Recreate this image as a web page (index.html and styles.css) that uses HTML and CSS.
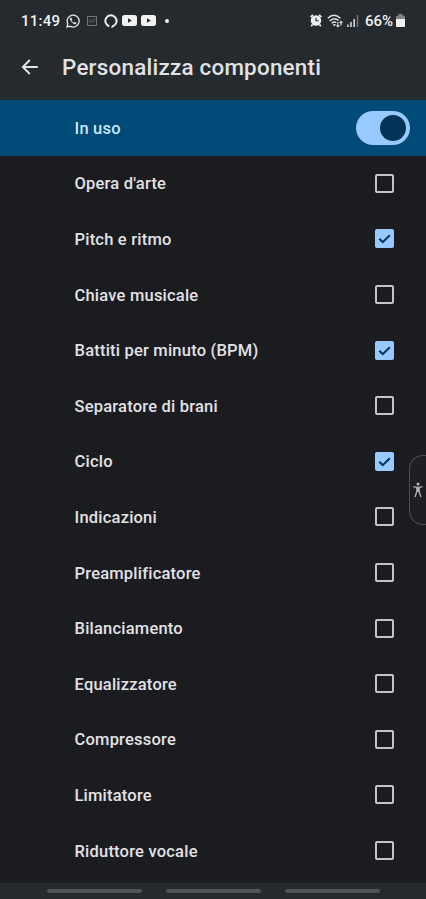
FILE: index.html
```html
<!DOCTYPE html>
<html lang="it">
<head>
<meta charset="utf-8">
<title>Personalizza componenti</title>
<link rel="stylesheet" href="styles.css">
</head>
<body>
<div class="screen">
  <div class="status">
    <span class="clock">11:49</span>
    <svg class="ic-chat" width="14" height="14" viewBox="0 0 14 14" fill="none"><path d="M1 13l.8-3.200A6 6 0 1 1 4.200 12.300z" stroke="#e6e8ea" stroke-width="1.300"/><path d="M4.500 3.500q-1.400 1.200 0 3.200t3.400 3.400q1.900.7 2.600-1l-1.900-1.100-.9.800Q6.200 8.200 5.400 6.600l.7-.8-.7-2.100z" fill="#e6e8ea"/></svg>
    <svg class="ic-box" width="10" height="10" viewBox="0 0 10 10" fill="none" stroke="#72777b"><path d="M.5.500h9v9h-9z"/><path d="M2 3.200l.8 3.600 1-3.200 1 3.200.8-3.600M6.500 3.200h1.500v1.800h-1.500M7 3.200v3.600" stroke-width=".6" opacity=".7"/></svg>
    <svg class="ic-ring" width="14" height="14" viewBox="0 0 14 14" fill="none"><path d="M5.300 12.300A5.600 5.600 0 1 1 8.900 12.200L9.300 11.400" stroke="#eceef0" stroke-width="2"/></svg>
    <svg class="ic-yt" width="15" height="11" viewBox="0 0 15 11"><rect width="15" height="11" rx="2.500" fill="#f1f1f1"/><path d="M6 3.200l3.800 2.300L6 7.800z" fill="#252a2e"/></svg>
    <svg class="ic-yt2" width="15" height="11" viewBox="0 0 15 11"><rect width="15" height="11" rx="2.500" fill="#f1f1f1"/><path d="M6 3.200l3.800 2.300L6 7.800z" fill="#252a2e"/></svg>
    <span class="dot"></span>
    <svg class="ic-alarm" width="12" height="13" viewBox="0 0 12 13"><circle cx="6" cy="6.500" r="5.200" fill="#eceef0"/><path d="M.6 3.200L3 .9M11.400 3.200L9 .9M2.500 10.500L1.200 12.200M9.500 10.500l1.300 1.700" stroke="#eceef0" stroke-width="1.800"/><path d="M6 3.800v3h2.500" fill="none" stroke="#252a2e" stroke-width="1.100"/></svg>
    <svg class="ic-wifi" width="17" height="14" viewBox="0 0 17 14" fill="none" stroke="#dfe2e4" stroke-width="1.500"><path d="M.8 4.300Q7 -1.700 13.400 4.300M2.800 7Q7 2.700 11.600 6.500M4.800 9.300Q7 7.200 9.300 8.600"/><path d="M6.300 10.700l1.100 1.200 1-1.200z" fill="#dfe2e4" stroke-width="1"/><path d="M10.900 8v4.700M9.400 11.300l1.500 1.500 1.500-1.500M14 11.500V7.300M12.700 8.800L14 7.300l1.400 1.500" stroke-width="1.100"/></svg>
    <svg class="ic-signal" width="12" height="12" viewBox="0 0 12 12" stroke="#dfe2e4" stroke-width="1.500"><path d="M1 9.500V12M4 7v5M7.200 4v8"/><path d="M10.500 0v12" opacity=".4"/></svg>
    <span class="percent">66%</span>
    <svg class="ic-batt" width="9" height="13" viewBox="0 0 9 13"><path d="M1 1.800h1.500V0h4v1.800H8a1 1 0 0 1 1 1V5H0V2.800a1 1 0 0 1 1-1z" fill="#7d8286"/><path d="M0 5h9v7a1 1 0 0 1-1 1H1a1 1 0 0 1-1-1z" fill="#f1f1f1"/></svg>
  </div>
  <header class="bar">
    <svg class="back" width="18" height="16" viewBox="0 0 18 16" fill="none" stroke="#e1e3e6" stroke-width="1.900"><path d="M16.800 8H2M8.800 1L1.800 8l7 7"/></svg>
    <h1>Personalizza componenti</h1>
  </header>
  <div class="row master"><span>In uso</span><div class="switch"><div class="thumb"></div></div></div>
  <main class="list">
    <div class="row"><span>Opera d'arte</span><i class="box"></i></div>
    <div class="row"><span>Pitch e ritmo</span><i class="box on"><svg viewBox="0 0 19 19"><path d="M4.300 9.700l3.500 3.500 7-7"/></svg></i></div>
    <div class="row"><span>Chiave musicale</span><i class="box"></i></div>
    <div class="row"><span>Battiti per minuto (BPM)</span><i class="box on"><svg viewBox="0 0 19 19"><path d="M4.300 9.700l3.500 3.500 7-7"/></svg></i></div>
    <div class="row"><span>Separatore di brani</span><i class="box"></i></div>
    <div class="row"><span>Ciclo</span><i class="box on"><svg viewBox="0 0 19 19"><path d="M4.300 9.700l3.500 3.500 7-7"/></svg></i></div>
    <div class="row"><span>Indicazioni</span><i class="box"></i></div>
    <div class="row"><span>Preamplificatore</span><i class="box"></i></div>
    <div class="row"><span>Bilanciamento</span><i class="box"></i></div>
    <div class="row"><span>Equalizzatore</span><i class="box"></i></div>
    <div class="row"><span>Compressore</span><i class="box"></i></div>
    <div class="row"><span>Limitatore</span><i class="box"></i></div>
    <div class="row"><span>Riduttore vocale</span><i class="box"></i></div>
  </main>
  <div class="nav"><i></i><i></i><i></i></div>
  <div class="access"><svg width="10" height="16" viewBox="0 0 10 16" fill="none" stroke="#b4b6b9" stroke-width="1.300"><circle cx="5" cy="2" r="1.500" fill="#b4b6b9" stroke="none"/><path d="M.5 4.700q4.500 1.200 9 0M3.900 5v4.500L2 15M6.100 5v4.500L8 15M5 5v5"/></svg></div>
</div>
</body>
</html>
```
FILE: styles.css
```css
* { box-sizing: border-box; }
body { margin: 0; background: #1b1c20; font-family: Roboto, sans-serif; color: #e1e2e6; }
.screen { position: relative; width: 426px; height: 899px; overflow: hidden; display: flex; flex-direction: column; background: #1b1c20; }
svg { display: block; flex: none; }

.status { height: 41px; flex: none; display: flex; align-items: center; padding: 0 21px 0 21px; background: #252a2e; color: #f0f1f2; font-size: 15px; font-weight: 500; }
.clock { width: 40px; flex: none; letter-spacing: .25px; white-space: nowrap; }
.ic-chat { margin-left: 5px; }
.ic-box { margin-left: 7px; }
.ic-ring { margin-left: 7px; }
.ic-yt { margin-left: 4px; }
.ic-yt2 { margin-left: 4px; }
.dot { width: 4px; height: 4px; margin-left: 9px; border-radius: 50%; background: #f1f1f1; }
.ic-alarm { margin-left: auto; }
.ic-wifi { margin-left: 5px; }
.ic-signal { margin-left: 3px; }
.percent { width: 29px; margin-left: 6px; font-size: 15px; white-space: nowrap; }
.ic-batt { margin-left: 2px; }

.bar { height: 59px; flex: none; display: flex; align-items: center; padding: 0 0 7px 20.500px; background: #252a2e; }
.bar h1 { margin: 0 0 0 23.500px; font-size: 22.400px; line-height: 30px; font-weight: 500; letter-spacing: .24px; white-space: nowrap; }

.row { height: 55.600px; flex: none; display: flex; align-items: center; justify-content: space-between; padding: 0 32px 0 74.500px; font-size: 16.500px; font-weight: 500; letter-spacing: .21px; white-space: nowrap; }
.row span { padding-top: 1px; }
.master { padding-right: 16.500px; background: #004a78; color: #c9e6ff; }
.switch { width: 54px; height: 34px; border-radius: 17px; background: #99caff; display: flex; align-items: center; justify-content: flex-end; padding-right: 4px; }
.thumb { width: 26px; height: 26px; border-radius: 50%; background: #003355; }
.list { flex: 1; min-height: 0; }
.box { width: 19px; height: 19px; border: 2px solid #c2c4c9; border-radius: 2px; }
.box.on { border: 0; background: #99caff; }
.box svg { width: 19px; height: 19px; fill: none; stroke: #003355; stroke-width: 2; }

.nav { height: 16px; flex: none; display: flex; justify-content: center; gap: 24px; padding-top: 6px; background: #252a2e; }
.nav i { width: 95px; height: 4px; border-radius: 2px; background: #505457; }
.access { position: absolute; right: -1px; top: 455px; width: 18px; height: 70px; border: 1.500px solid #4c4e51; border-right: 0; border-radius: 14px 0 0 14px; background: #1e1f22; display: flex; align-items: center; padding-left: 3px; }
```
